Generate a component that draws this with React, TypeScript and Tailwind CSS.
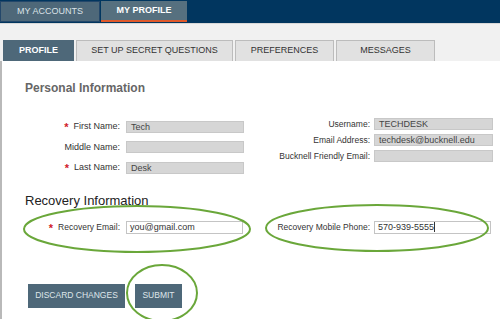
import React from 'react';

const LEFT_FIELDS = [
  { label: 'First Name:', value: 'Tech', required: true },
  { label: 'Middle Name:', value: '', required: false },
  { label: 'Last Name:', value: 'Desk', required: true },
];

const RIGHT_FIELDS = [
  { label: 'Username:', value: 'TECHDESK' },
  { label: 'Email Address:', value: 'techdesk@bucknell.edu' },
  { label: 'Bucknell Friendly Email:', value: '' },
];

const SUB_TABS = [
  { label: 'PROFILE', w: 'w-[71px]', active: true },
  { label: 'SET UP SECRET QUESTIONS', w: 'w-[157px]', active: false },
  { label: 'PREFERENCES', w: 'w-[99px]', active: false },
  { label: 'MESSAGES', w: 'w-[99px]', active: false },
];

function Asterisk() {
  return <span className="text-[#d0202a] text-[11px] font-bold leading-none mr-[5px] mt-[2px]">*</span>;
}

export default function App() {
  return (
    <div
      className="relative w-[500px] h-[319px] overflow-hidden bg-white text-[#333]"
      style={{ fontFamily: '"Liberation Sans", Arial, sans-serif' }}
    >
      {/* top nav */}
      <div className="h-[23px] bg-[#01365f] flex items-start pt-[1px]">
        <div className="w-[100px] h-[21px] bg-[#4e6879] border border-[#23476a] flex items-center justify-center text-[9px] text-[#dbe3e8]">
          MY ACCOUNTS
        </div>
        <div className="ml-[1px] w-[86px] h-[21px] bg-[#56707f] border-b-2 border-[#e0592b] flex items-center justify-center text-[9px] font-bold text-white">
          MY PROFILE
        </div>
      </div>

      {/* sub tabs */}
      <div className="h-[38px] bg-[#f1f1f1] border-t border-[#d8d8d8] flex items-end pl-[3px] gap-[2px]">
        {SUB_TABS.map((t) => (
          <div
            key={t.label}
            className={`${t.w} h-[21px] flex items-center justify-center border text-[9px] ${
              t.active
                ? 'bg-[#4e6879] border-[#4e6879] text-white font-bold'
                : 'bg-[#e1e1e1] border-[#bcbcbc] border-b-0 text-[#333]'
            }`}
          >
            {t.label}
          </div>
        ))}
      </div>

      {/* content */}
      <div className="h-[258px] border-l-2 border-[#b9b9b9] bg-white pl-[23px]">
        <h2 className="pt-[20px] text-[12px] font-bold text-[#666] leading-[14px]">Personal Information</h2>

        <div className="flex mt-[23px]">
          <div className="flex flex-col gap-[7px] pt-[2px]">
            {LEFT_FIELDS.map((f) => (
              <div key={f.label} className="flex items-center">
                <div className="w-[95px] flex items-center justify-end text-[9px] text-[#333]">
                  {f.required && <Asterisk />}
                  {f.label}
                </div>
                <div className="ml-[6px] w-[118px] h-[12px] bg-[#d6d6d6] border border-[#c8c8c8] text-[9px] leading-[10px] px-[4px] text-[#444]">
                  {f.value}
                </div>
              </div>
            ))}
          </div>
          <div className="flex flex-col gap-[3px] ml-[26px]">
            {RIGHT_FIELDS.map((f) => (
              <div key={f.label} className="flex items-center">
                <div className="w-[100px] text-right text-[8.5px] text-[#333] whitespace-nowrap">{f.label}</div>
                <div className="ml-[4px] w-[119px] h-[12px] bg-[#d6d6d6] border border-[#c8c8c8] text-[9px] leading-[10px] px-[4px] text-[#444]">
                  {f.value}
                </div>
              </div>
            ))}
          </div>
        </div>

        <h2 className="mt-[18px] text-[13px] text-[#222] leading-[15px]">Recovery Information</h2>

        <div className="flex mt-[13px]">
          <div className="flex items-center">
            <div className="w-[95px] flex items-center justify-end text-[8.5px] text-[#333]">
              <Asterisk />
              Recovery Email:
            </div>
            <div className="ml-[6px] w-[117px] h-[13px] bg-white border border-[#c4c4c4] text-[9px] leading-[11px] px-[3px] text-[#333]">
              you@gmail.com
            </div>
          </div>
          <div className="flex items-center ml-[27px]">
            <div className="w-[100px] text-right text-[8.5px] text-[#333] whitespace-nowrap">Recovery Mobile Phone:</div>
            <div className="ml-[4px] w-[117px] h-[13px] bg-white border border-[#c4c4c4] text-[9px] leading-[11px] px-[3px] text-[#333]">
              570-939-5555<span className="inline-block w-px h-[10px] bg-[#333] align-middle" />
            </div>
          </div>
        </div>

        <div className="flex gap-[10px] mt-[50px] ml-[3px]">
          <button className="w-[97px] h-[24px] bg-[#4e6879] text-[#dfe6ea] text-[8.5px]">DISCARD CHANGES</button>
          <button className="w-[47px] h-[24px] bg-[#4e6879] text-[#dfe6ea] text-[8.5px]">SUBMIT</button>
        </div>
      </div>

      {/* annotation ellipses */}
      <svg className="absolute inset-0 pointer-events-none" width="500" height="319">
        <ellipse cx="137" cy="229" rx="113" ry="23" fill="none" stroke="#6aa73a" strokeWidth="2" />
        <ellipse cx="377" cy="228" rx="111" ry="23" fill="none" stroke="#6aa73a" strokeWidth="2" />
        <ellipse cx="162" cy="293" rx="35" ry="28" fill="none" stroke="#6aa73a" strokeWidth="2" />
      </svg>
    </div>
  );
}
